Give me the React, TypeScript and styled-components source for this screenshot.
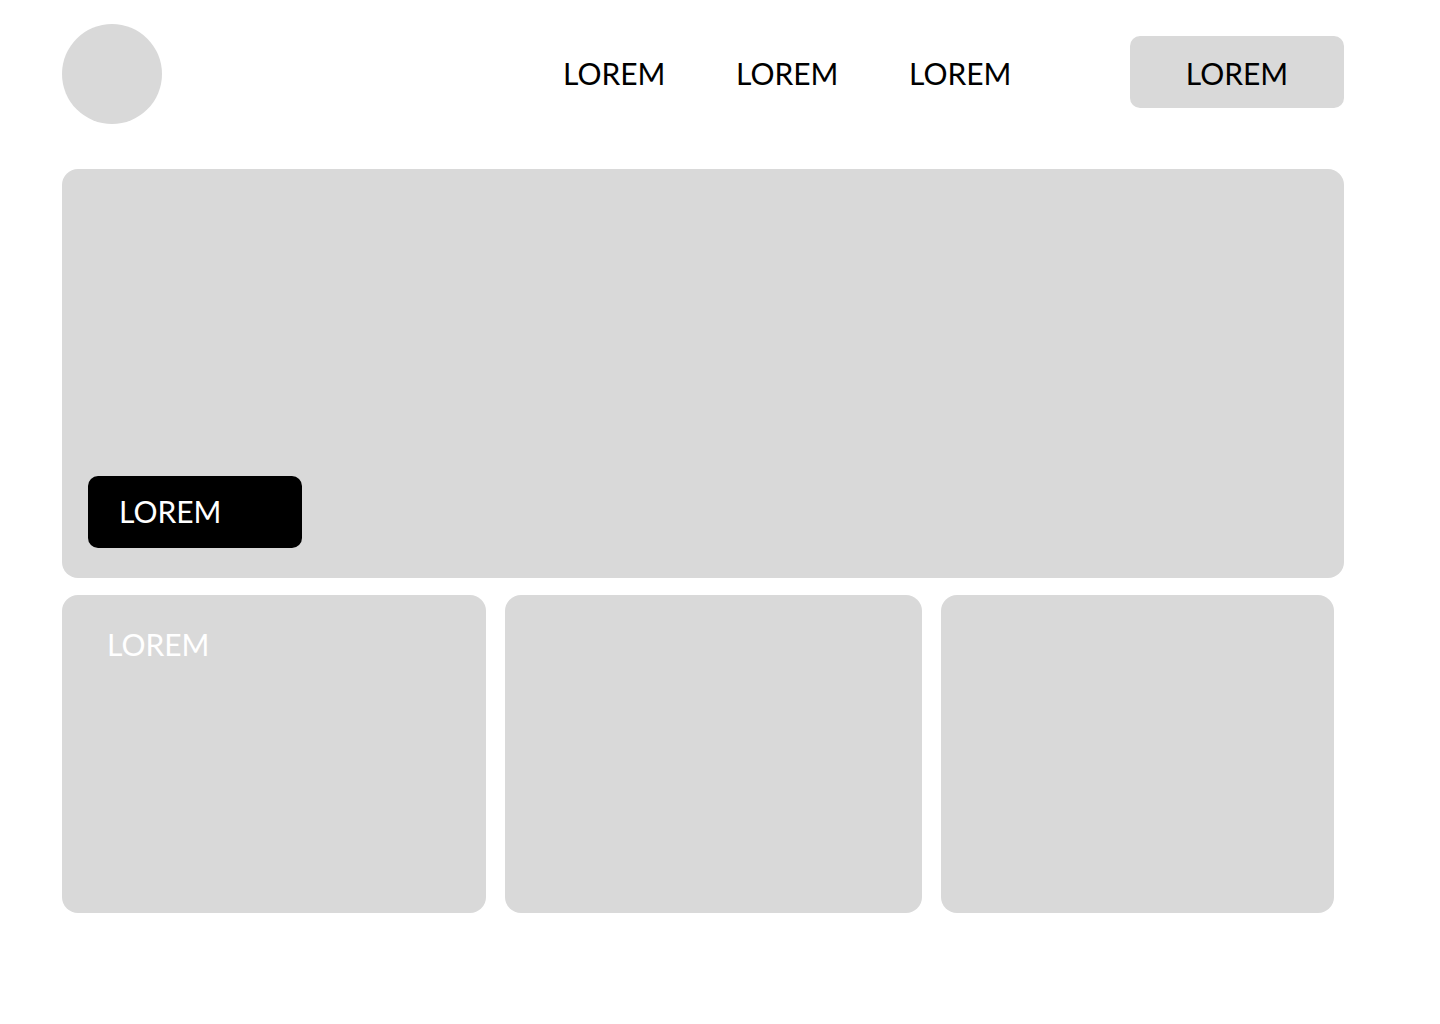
import styled, { createGlobalStyle } from 'styled-components';

const GlobalStyle = createGlobalStyle`
  * {
    box-sizing: border-box;
  }

  body {
    margin: 0;
    background: #ffffff;
    font-family: Lato, 'Open Sans', sans-serif;
    font-weight: 400;
  }
`;

export default function App() {
  const navItems = ['LOREM', 'LOREM', 'LOREM'];

  return (
    <Page>
      <GlobalStyle />

      <Header>
        <Logo />
        <Nav>
          {navItems.map((item, index) => (
            <NavLink key={index}>{item}</NavLink>
          ))}
        </Nav>
        <HeaderButton>LOREM</HeaderButton>
      </Header>

      <Hero>
        <HeroButton>LOREM</HeroButton>
      </Hero>

      <Cards>
        <Card>
          <CardTitle>LOREM</CardTitle>
        </Card>
        <Card />
        <Card />
      </Cards>
    </Page>
  );
}

const Page = styled.main`
  width: 1440px;
  min-height: 1024px;
  padding: 24px 0 0 62px;
`;

const Header = styled.header`
  display: flex;
  align-items: center;
  width: 1282px;
  height: 100px;
`;

const Logo = styled.div`
  width: 100px;
  height: 100px;
  border-radius: 50%;
  background: #d9d9d9;
`;

const Nav = styled.nav`
  display: flex;
  gap: 71px;
  margin-left: 401px;
  margin-top: -2px;
`;

const NavLink = styled.a`
  width: 102px;
  font-size: 30px;
  line-height: 1;
  color: #000000;
  white-space: nowrap;
  cursor: pointer;
`;

const HeaderButton = styled.button`
  width: 214px;
  height: 72px;
  margin-left: auto;
  margin-top: -4px;
  padding: 2px 0 0;
  border: none;
  border-radius: 10px;
  background: #d9d9d9;
  color: #000000;
  font-family: inherit;
  font-weight: inherit;
  font-size: 30px;
  cursor: pointer;
`;

const Hero = styled.section`
  display: flex;
  align-items: flex-end;
  width: 1282px;
  height: 409px;
  margin-top: 45px;
  padding: 0 0 30px 26px;
  border-radius: 16px;
  background: #d9d9d9;
`;

const HeroButton = styled.button`
  width: 214px;
  height: 72px;
  padding: 0 0 2px 31px;
  border: none;
  border-radius: 10px;
  background: #000000;
  color: #ffffff;
  font-family: inherit;
  font-weight: inherit;
  font-size: 30px;
  text-align: left;
  cursor: pointer;
`;

const Cards = styled.section`
  display: grid;
  grid-template-columns: 424px 417px 393px;
  column-gap: 19px;
  margin-top: 17px;
`;

const Card = styled.article`
  height: 318px;
  padding: 34px 45px;
  border-radius: 16px;
  background: #d9d9d9;
`;

const CardTitle = styled.h2`
  margin: 0;
  font-size: 30px;
  font-weight: inherit;
  line-height: 1;
  color: #ffffff;
`;
